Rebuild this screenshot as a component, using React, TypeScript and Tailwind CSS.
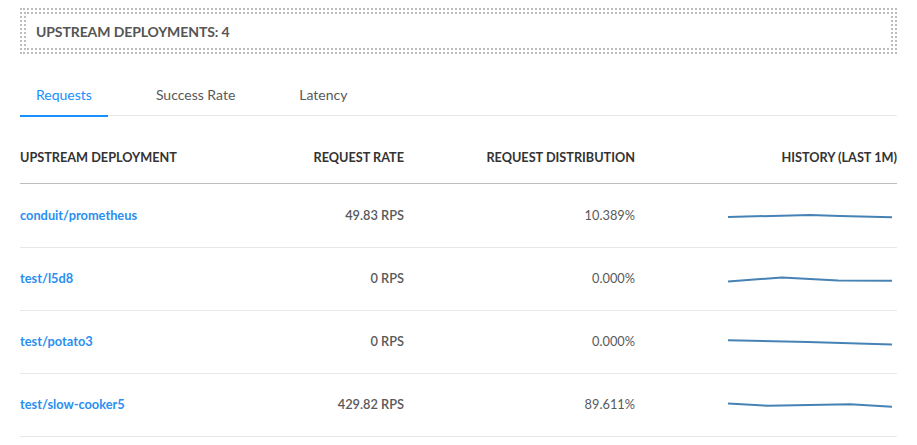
import React from "react";

// Upstream deployments panel: dotted summary box, metric tabs and a table
// with a tiny sparkline per row.

type Row = {
  name: string;
  rate: string;
  dist: string;
  points: [number, number][];
};

const rows: Row[] = [
  {
    name: "conduit/prometheus",
    rate: "49.83 RPS",
    dist: "10.389%",
    points: [[0, 16], [82, 14], [112, 15], [164, 16.3]],
  },
  {
    name: "test/l5d8",
    rate: "0 RPS",
    dist: "0.000%",
    points: [[0, 17.5], [54, 13.4], [110, 16.5], [164, 16.8]],
  },
  {
    name: "test/potato3",
    rate: "0 RPS",
    dist: "0.000%",
    points: [[0, 13.2], [80, 15], [164, 17.5]],
  },
  {
    name: "test/slow-cooker5",
    rate: "429.82 RPS",
    dist: "89.611%",
    points: [[0, 13.5], [40, 15.8], [122, 14.2], [164, 16.8]],
  },
];

function Sparkline({ points }: { points: [number, number][] }) {
  const d = points.map(([x, y], i) => `${i ? "L" : "M"}${x} ${y}`).join(" ");
  return (
    <svg width="164" height="30" viewBox="0 0 164 30" className="mr-[5px]">
      <path d={d} fill="none" stroke="#4682b4" strokeWidth="2" />
    </svg>
  );
}

const tabs = ["Requests", "Success Rate", "Latency"];

export default function App() {
  return (
    <div className="w-[917px] h-[445px] bg-white overflow-hidden pl-5 pr-5 pt-[8px] font-['Lato','Liberation_Sans',sans-serif]">
      <div className="w-[877px] border-2 border-dotted border-[#bdbdbd] p-[2px]">
        <div className="border-2 border-dotted border-[#bdbdbd] h-[38px] flex items-center pl-[10px] pt-px">
          <span className="text-[14px] font-bold text-[#555] tracking-[-0.1px]">
            UPSTREAM DEPLOYMENTS: 4
          </span>
        </div>
      </div>

      <div className="w-[877px] mt-[28px] flex border-b border-[#e8e8e8] h-[34px]">
        {tabs.map((t, i) => (
          <div
            key={t}
            className={
              i === 0
                ? "px-4 mr-8 pt-[2px] text-[14px] text-[#1890ff] border-b-2 border-[#1890ff] -mb-px h-[35px]"
                : "px-4 mr-8 pt-[2px] text-[14px] text-[#595959] h-[35px]"
            }
          >
            {t}
          </div>
        ))}
      </div>

      <div className="w-[877px] mt-[16px]">
        <div className="grid grid-cols-[220px_164px_231px_262px] h-[52px] pt-px items-center border-b border-[#bdbdbd] text-[12.7px] font-bold text-[#333]">
          <div>UPSTREAM DEPLOYMENT</div>
          <div className="text-right">REQUEST RATE</div>
          <div className="text-right">REQUEST DISTRIBUTION</div>
          <div className="text-right">HISTORY (LAST 1M)</div>
        </div>
        <div className="pt-px">
          {rows.map((r) => (
            <div
              key={r.name}
              className="grid grid-cols-[220px_164px_231px_262px] h-[63px] items-center border-b border-[#e8e8e8] text-[12.8px]"
            >
              <div className="font-bold text-[#2a8ff0]">{r.name}</div>
              <div className="text-right font-semibold text-[#595959]">{r.rate}</div>
              <div className="text-right text-[#595959]">{r.dist}</div>
              <div className="flex justify-end">
                <Sparkline points={r.points} />
              </div>
            </div>
          ))}
        </div>
      </div>
    </div>
  );
}
